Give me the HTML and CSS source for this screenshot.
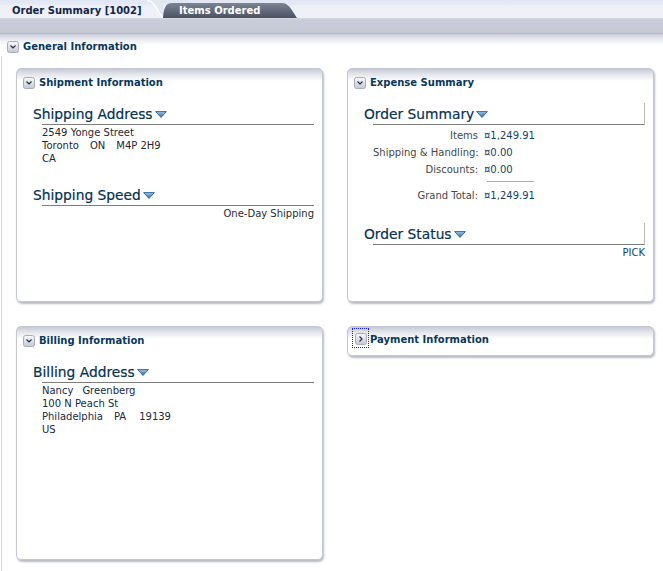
FILE: index.html
```html
<!DOCTYPE html>
<html lang="en">
<head>
<meta charset="utf-8">
<title>Order Summary</title>
<link rel="stylesheet" href="styles.css">
</head>
<body>
<div class="tabbar">
  <div class="tab tab-active">Order Summary [1002]</div>
  <svg class="tab-edge" width="16" height="18" viewBox="0 0 16 18"><path d="M0 0 C7 0 10 10 16 18 L16 0 Z" fill="#e3e7ee"/><path d="M0 0.6 C7 0.6 10 10 16 18" fill="none" stroke="#ffffff" stroke-width="1.4"/></svg>
  <div class="tab tab-inactive">Items Ordered</div>
</div>
<div class="main">
  <div class="sdh">
    <svg class="tog" width="12" height="12" viewBox="0 0 12 12"><defs><linearGradient id="g0" x1="0" y1="0" x2="0" y2="1"><stop offset="0" stop-color="#f8f9fc"/><stop offset="1" stop-color="#c4c7d3"/></linearGradient></defs><rect x="0.5" y="0.5" width="11" height="11" rx="2" fill="url(#g0)" stroke="#a7abba"/><path d="M3.5 4.5 L6 7 L8.5 4.5" fill="none" stroke="#1f2b3b" stroke-width="1.1"/></svg>
    <span class="sdh-title">General Information</span>
  </div>
  <div class="content">
    <div class="grid">
      <section class="panel">
        <div class="panel-head">
          <svg class="tog" width="12" height="12" viewBox="0 0 12 12"><defs><linearGradient id="g1" x1="0" y1="0" x2="0" y2="1"><stop offset="0" stop-color="#f8f9fc"/><stop offset="1" stop-color="#c4c7d3"/></linearGradient></defs><rect x="0.5" y="0.5" width="11" height="11" rx="2" fill="url(#g1)" stroke="#a7abba"/><path d="M3.5 4.5 L6 7 L8.5 4.5" fill="none" stroke="#1f2b3b" stroke-width="1.1"/></svg>
          <span class="panel-title">Shipment Information</span>
        </div>
        <div class="panel-body">
          <div class="sub-head">
            <span class="sub-title">Shipping Address</span>
            <svg class="tri" width="12" height="7" viewBox="0 0 12 7"><defs><linearGradient id="t1" x1="0" y1="0" x2="0" y2="1"><stop offset="0" stop-color="#a3c8ea"/><stop offset="1" stop-color="#2a63a0"/></linearGradient></defs><path d="M0.6 0.6 H11.4 L6 6.4 Z" fill="url(#t1)" stroke="#356a9f" stroke-width="1" stroke-linejoin="round"/></svg>
          </div>
          <div class="lines">
            <div>2549 Yonge Street</div>
            <div><span class="sp">Toronto</span><span class="sp">ON</span>M4P 2H9</div>
            <div>CA</div>
          </div>
          <div class="sub-head mt21">
            <span class="sub-title">Shipping Speed</span>
            <svg class="tri" width="12" height="7" viewBox="0 0 12 7"><defs><linearGradient id="t2" x1="0" y1="0" x2="0" y2="1"><stop offset="0" stop-color="#a3c8ea"/><stop offset="1" stop-color="#2a63a0"/></linearGradient></defs><path d="M0.6 0.6 H11.4 L6 6.4 Z" fill="url(#t2)" stroke="#356a9f" stroke-width="1" stroke-linejoin="round"/></svg>
          </div>
          <div class="lines right">One-Day Shipping</div>
        </div>
      </section>

      <section class="panel">
        <div class="panel-head">
          <svg class="tog" width="12" height="12" viewBox="0 0 12 12"><defs><linearGradient id="g2" x1="0" y1="0" x2="0" y2="1"><stop offset="0" stop-color="#f8f9fc"/><stop offset="1" stop-color="#c4c7d3"/></linearGradient></defs><rect x="0.5" y="0.5" width="11" height="11" rx="2" fill="url(#g2)" stroke="#a7abba"/><path d="M3.5 4.5 L6 7 L8.5 4.5" fill="none" stroke="#1f2b3b" stroke-width="1.1"/></svg>
          <span class="panel-title">Expense Summary</span>
        </div>
        <div class="panel-body">
          <div class="sub-head tick">
            <span class="sub-title">Order Summary</span>
            <svg class="tri" width="12" height="7" viewBox="0 0 12 7"><defs><linearGradient id="t3" x1="0" y1="0" x2="0" y2="1"><stop offset="0" stop-color="#a3c8ea"/><stop offset="1" stop-color="#2a63a0"/></linearGradient></defs><path d="M0.6 0.6 H11.4 L6 6.4 Z" fill="url(#t3)" stroke="#356a9f" stroke-width="1" stroke-linejoin="round"/></svg>
          </div>
          <div class="summary">
            <span class="lbl">Items</span><span class="val">¤1,249.91</span>
            <span class="lbl">Shipping &amp; Handling:</span><span class="val">¤0.00</span>
            <span class="lbl">Discounts:</span><span class="val">¤0.00</span>
            <span></span><span class="sep"></span>
            <span class="lbl">Grand Total:</span><span class="val">¤1,249.91</span>
          </div>
          <div class="sub-head tick mt19">
            <span class="sub-title">Order Status</span>
            <svg class="tri" width="12" height="7" viewBox="0 0 12 7"><defs><linearGradient id="t4" x1="0" y1="0" x2="0" y2="1"><stop offset="0" stop-color="#a3c8ea"/><stop offset="1" stop-color="#2a63a0"/></linearGradient></defs><path d="M0.6 0.6 H11.4 L6 6.4 Z" fill="url(#t4)" stroke="#356a9f" stroke-width="1" stroke-linejoin="round"/></svg>
          </div>
          <div class="lines right val">PICK</div>
        </div>
      </section>

      <section class="panel">
        <div class="panel-head">
          <svg class="tog" width="12" height="12" viewBox="0 0 12 12"><defs><linearGradient id="g3" x1="0" y1="0" x2="0" y2="1"><stop offset="0" stop-color="#f8f9fc"/><stop offset="1" stop-color="#c4c7d3"/></linearGradient></defs><rect x="0.5" y="0.5" width="11" height="11" rx="2" fill="url(#g3)" stroke="#a7abba"/><path d="M3.5 4.5 L6 7 L8.5 4.5" fill="none" stroke="#1f2b3b" stroke-width="1.1"/></svg>
          <span class="panel-title">Billing Information</span>
        </div>
        <div class="panel-body">
          <div class="sub-head">
            <span class="sub-title">Billing Address</span>
            <svg class="tri" width="12" height="7" viewBox="0 0 12 7"><defs><linearGradient id="t5" x1="0" y1="0" x2="0" y2="1"><stop offset="0" stop-color="#a3c8ea"/><stop offset="1" stop-color="#2a63a0"/></linearGradient></defs><path d="M0.6 0.6 H11.4 L6 6.4 Z" fill="url(#t5)" stroke="#356a9f" stroke-width="1" stroke-linejoin="round"/></svg>
          </div>
          <div class="lines billing">
            <div><span class="sp-s">Nancy</span>Greenberg</div>
            <div>100 N Peach St</div>
            <div><span class="sp">Philadelphia</span><span class="sp-l">PA</span>19139</div>
            <div>US</div>
          </div>
        </div>
      </section>

      <section class="panel panel-short">
        <div class="panel-head focus-head">
          <span class="focus">
            <svg class="tog" width="12" height="12" viewBox="0 0 12 12"><defs><linearGradient id="g4" x1="0" y1="0" x2="0" y2="1"><stop offset="0" stop-color="#f8f9fc"/><stop offset="1" stop-color="#c4c7d3"/></linearGradient></defs><rect x="0.5" y="0.5" width="11" height="11" rx="2" fill="url(#g4)" stroke="#a7abba"/><path d="M4.5 3.5 L7 6 L4.5 8.5" fill="none" stroke="#1f2b3b" stroke-width="1.1"/></svg>
          </span>
          <span class="panel-title">Payment Information</span>
        </div>
      </section>
    </div>
  </div>
</div>
</body>
</html>
```

FILE: styles.css
```css
* {
  box-sizing: border-box;
}

html, body {
  margin: 0;
  padding: 0;
}

body {
  width: 663px;
  height: 571px;
  overflow: hidden;
  background: #ffffff;
  font-family: "DejaVu Sans", "Liberation Sans", sans-serif;
  font-size: 10px;
  color: #1f252d;
}

/* ---------- tab strip ---------- */
.tabbar {
  display: flex;
  align-items: flex-end;
  height: 18px;
  background: linear-gradient(#e0e6f3 0, #e4e9f5 4px, #edf0f6 6px, #eef1f6 18px);
}

.tab {
  display: flex;
  align-items: center;
  white-space: nowrap;
  font-weight: bold;
  font-size: 10px;
}

.tab-active {
  width: 147px;
  height: 18px;
  padding: 2px 0 0 12px;
  color: #15264a;
}

.tab-edge {
  display: block;
  flex: none;
}

.tab-inactive {
  width: 134px;
  height: 15px;
  padding-left: 16px;
  color: #ffffff;
  background: linear-gradient(#7c8393, #4a5263);
  clip-path: path('M0 15 C0.5 6 2.5 0 9 0 L119 0 C126 0 128.5 7 134 15 Z');
}

/* ---------- main area ---------- */
.main {
  height: 553px;
  padding-top: 22px;
  background: #ffffff linear-gradient(#d6d8df 0, #c9cdd9 2px, #c6cad7 14px, #babecd 15.5px, #d0d3dd 17px, #eaecf2 22px, #ffffff 27px) no-repeat;
  background-size: 100% 30px;
}

.sdh {
  display: flex;
  align-items: center;
  gap: 4px;
  height: 13px;
  padding-left: 7px;
}

.tog {
  display: block;
  flex: none;
}

.sdh-title,
.panel-title {
  font-weight: bold;
  font-size: 10px;
  color: #07375a;
  white-space: nowrap;
}

.content {
  height: 515px;
  margin: 3px 0 0 1px;
  padding: 12px 0 0 14px;
  border-left: 1px solid #d6d6e4;
}

.grid {
  display: grid;
  grid-template-columns: 307px 307px;
  grid-template-rows: 234px 234px;
  gap: 24px;
}

/* ---------- panels ---------- */
.panel {
  border: 1px solid #c4c7d3;
  border-radius: 5px;
  background: #ffffff linear-gradient(#c7cad6 0, #e2e4eb 5px, #ffffff 12px) no-repeat;
  box-shadow: 1px 2px 2px rgba(80, 85, 110, 0.4);
}

.panel-short {
  align-self: start;
  height: 30px;
}

.panel-head {
  display: flex;
  align-items: center;
  gap: 4px;
  height: 27px;
  padding-left: 6px;
}

.focus-head {
  padding-left: 4px;
  gap: 1px;
  align-items: flex-start;
}

.focus {
  display: block;
  margin-top: 1px;
  padding: 4px 1px 2px 2px;
  border: 1px dotted #1a1aff;
}

.focus-head .panel-title {
  margin-top: 7px;
}

.panel-body {
  padding: 0 8px 0 25px;
}

.sub-head {
  display: flex;
  align-items: center;
  height: 20px;
  margin-top: 9px;
  border-bottom: 1px solid #7e7e7e;
}

.sub-head.tick {
  height: 22px;
  margin-top: 7px;
  padding-top: 2px;
  border-right: 1px solid #bcbcbc;
}

.sub-head.mt21 {
  margin-top: 21px;
}

.sub-head.mt19 {
  margin-top: 19px;
}

.sub-title {
  margin-left: -9px;
  font-size: 13.8px;
  line-height: 19px;
  color: #06324f;
  white-space: nowrap;
  -webkit-text-stroke: 0.2px #06324f;
}

.tri {
  display: block;
  flex: none;
  margin-left: 2px;
}

.lines {
  padding-top: 1px;
  line-height: 13px;
  color: #1f2731;
  white-space: nowrap;
}

.billing {
  color: #16293f;
}

.sp {
  margin-right: 11px;
}

.sp-s {
  margin-right: 9px;
}

.sp-l {
  margin-right: 13px;
}

.right {
  text-align: right;
  color: #2b2b2b;
}

/* ---------- expense summary ---------- */
.summary {
  display: grid;
  grid-template-columns: 105px max-content;
  column-gap: 6px;
  padding-top: 2px;
  line-height: 17px;
  white-space: nowrap;
}

.lbl {
  text-align: right;
  color: #474747;
}

.val {
  color: #163f66;
}

.sep {
  width: 47px;
  height: 1px;
  margin: 3px 0 5px 3px;
  background: #a9afbc;
}
```
